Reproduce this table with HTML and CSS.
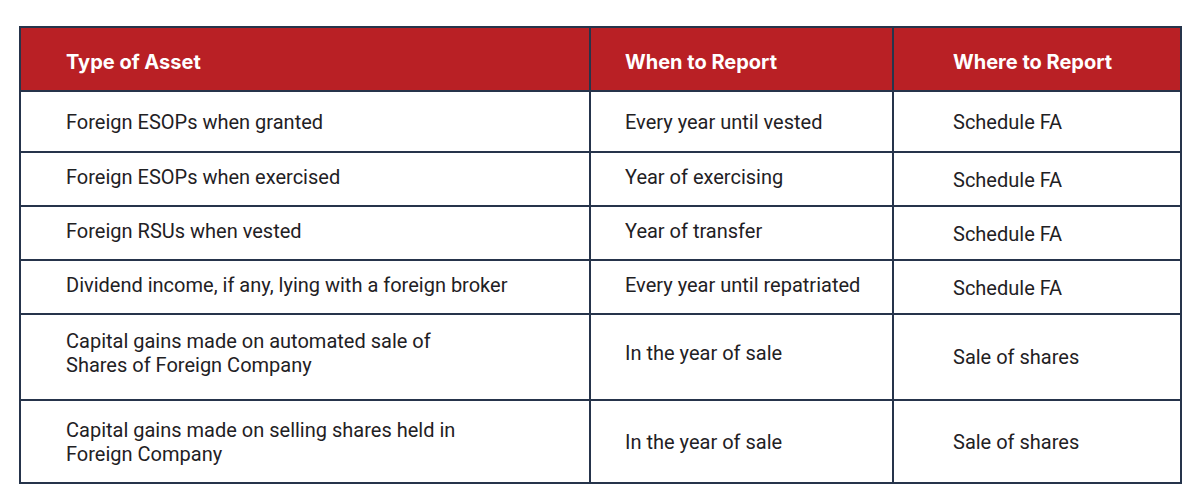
FILE: index.html
```html
<!DOCTYPE html>
<html>
<head>
<meta charset="utf-8">
<link rel="stylesheet" href="styles.css">
</head>
<body>
<div class="wrap">
<table class="grid">
  <colgroup>
    <col class="c1">
    <col class="c2">
    <col class="c3">
  </colgroup>
  <thead>
    <tr class="head">
      <th class="p1">Type of Asset</th>
      <th class="p2">When to Report</th>
      <th class="p3">Where to Report</th>
    </tr>
  </thead>
  <tbody>
    <tr class="r1">
      <td class="p1">Foreign ESOPs when granted</td>
      <td class="p2">Every year until vested</td>
      <td class="p3">Schedule FA</td>
    </tr>
    <tr class="r2">
      <td class="p1">Foreign ESOPs when exercised</td>
      <td class="p2">Year of exercising</td>
      <td class="p3 low">Schedule FA</td>
    </tr>
    <tr class="r2">
      <td class="p1">Foreign RSUs when vested</td>
      <td class="p2">Year of transfer</td>
      <td class="p3 low">Schedule FA</td>
    </tr>
    <tr class="r2">
      <td class="p1">Dividend income, if any, lying with a foreign broker</td>
      <td class="p2">Every year until repatriated</td>
      <td class="p3 low">Schedule FA</td>
    </tr>
    <tr class="r3">
      <td class="p1">Capital gains made on automated sale of<br>Shares of Foreign Company</td>
      <td class="p2">In the year of sale</td>
      <td class="p3">Sale of shares</td>
    </tr>
    <tr class="r4">
      <td class="p1">Capital gains made on selling shares held in<br>Foreign Company</td>
      <td class="p2">In the year of sale</td>
      <td class="p3">Sale of shares</td>
    </tr>
  </tbody>
</table>
</div>
</body>
</html>
```

FILE: styles.css
```css
html, body {
  margin: 0;
  background: #ffffff;
}
.wrap {
  padding: 26px 0 0 19px;
}
.grid {
  border-collapse: collapse;
  table-layout: fixed;
  width: 1161px;
  font-family: Roboto, "Liberation Sans", sans-serif;
  font-size: 20px;
  color: #1f2124;
}
.c1 { width: 570px; }
.c2 { width: 303px; }
.c3 { width: 288px; }
.grid th, .grid td {
  border: 2px solid #26344b;
  text-align: left;
  vertical-align: middle;
  padding-top: 0;
  padding-bottom: 0;
  line-height: 24px;
}
.grid th {
  background: #b92025;
  color: #ffffff;
  font-family: Inter, "Open Sans", sans-serif;
  font-weight: 700;
  font-size: 20px;
  letter-spacing: 0;
  padding-top: 5px;
}
.p1 { padding-left: 45px; }
.p2 { padding-left: 34px; }
.p3 { padding-left: 59px; }
.head { height: 64px; }
.r1 { height: 61px; }
.r2 { height: 54px; }
.r3 { height: 86px; }
.r4 { height: 83px; }
.r2 td { padding-bottom: 4px; }
.r2 td.low { padding-bottom: 0; padding-top: 2px; }
.r3 td { padding-bottom: 8px; }
.r3 td.p3 { padding-bottom: 0; }
```
